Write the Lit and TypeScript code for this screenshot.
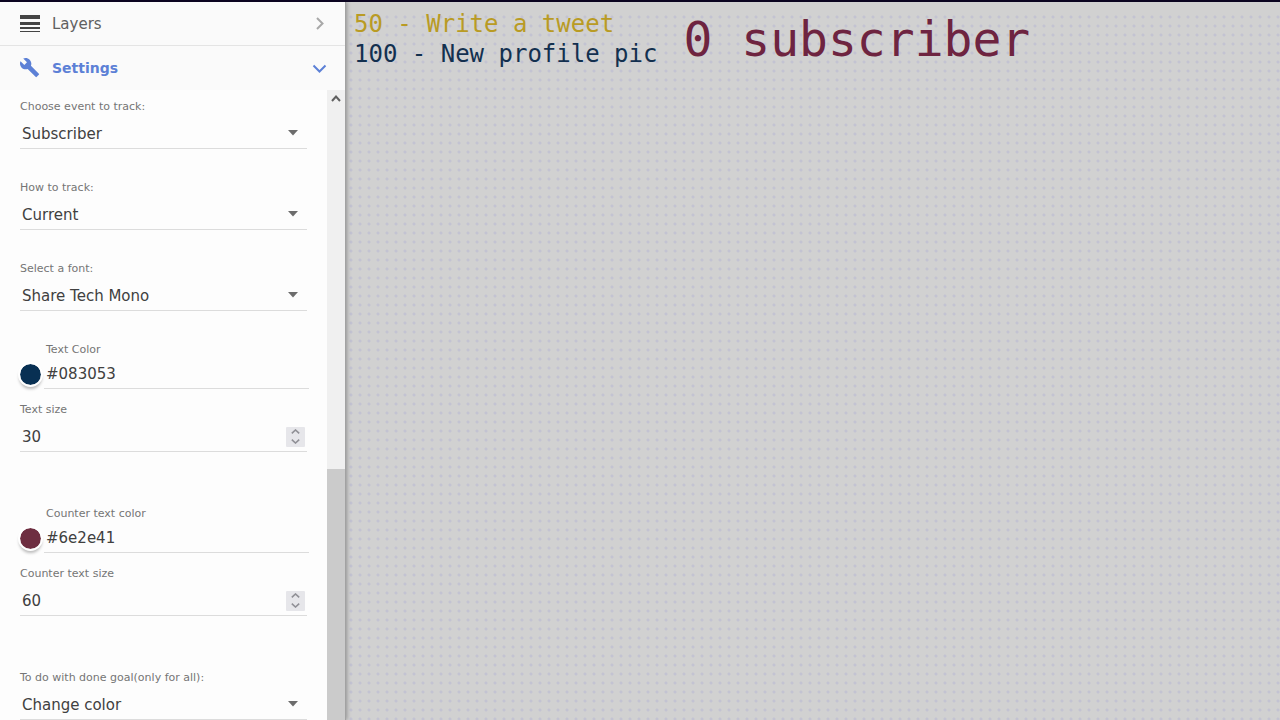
import { LitElement, html, css } from "lit";
import { customElement, property, state } from "lit/decorators.js";

const controls = css`
  * { box-sizing: border-box; }
  .label { display: block; font-size: 11px; line-height: 16px; color: #757575; }
  .control {
    display: block; width: 100%; height: 30px; margin: 0; padding: 1px 2px 0;
    border: 0; border-bottom: 1px solid #dcdcdc; border-radius: 0; outline: 0;
    background: transparent; color: #404040; font: inherit; font-size: 15px; line-height: 28px;
    appearance: none;
  }
`;

@customElement("select-field")
export class SelectField extends LitElement {
  @property() label = "";
  @property({ attribute: false }) options: string[] = [];

  static styles = [controls, css`
    :host { display: block; }
    .wrap { display: grid; margin-top: 4px; align-items: center; }
    .wrap > * { grid-area: 1 / 1; }
    .arrow { justify-self: end; width: 10px; height: 6px; margin: 0 9px 2px 0; fill: #6c6c6c; pointer-events: none; }
  `];

  render() {
    return html`
      <label class="label" for="s">${this.label}</label>
      <div class="wrap">
        <select class="control" id="s">${this.options.map((o) => html`<option>${o}</option>`)}</select>
        <svg class="arrow" viewBox="0 0 10 6"><path d="M0 0h10L5 5.5z" /></svg>
      </div>`;
  }
}

@customElement("color-field")
export class ColorField extends LitElement {
  @property() label = "";
  @property() value = "#000000";

  static styles = [controls, css`
    :host { display: grid; grid-template-columns: 24px 1fr; row-gap: 1px; margin-right: -2px; }
    .label { grid-column: 2; padding-left: 2px; }
    .swatch {
      width: 21px; height: 21px; margin: 5px 0 0; padding: 0; border: 0;
      border-radius: 50%; background: none; appearance: none; outline: 0;
      box-shadow: 0 0 0 2px #fff, 0 3px 3px 1px rgba(0, 0, 0, 0.25);
    }
    .swatch::-webkit-color-swatch-wrapper { padding: 0; }
    .swatch::-webkit-color-swatch { border: 0; border-radius: 50%; }
  `];

  private change(e: Event) {
    this.value = (e.target as HTMLInputElement).value;
  }

  render() {
    return html`
      <label class="label" for="hex">${this.label}</label>
      <input class="swatch" type="color" aria-label="${this.label}" .value=${this.value} @input=${this.change} />
      <input class="control" id="hex" type="text" .value=${this.value} @change=${this.change} />`;
  }
}

@customElement("number-field")
export class NumberField extends LitElement {
  @property() label = "";
  @property({ type: Number }) value = 0;

  static styles = [controls, css`
    :host { display: block; }
    .wrap { display: flex; align-items: center; margin-top: 4px; padding-right: 2px; border-bottom: 1px solid #dcdcdc; }
    .control { flex: 1; min-width: 0; height: 29px; border: 0; appearance: textfield; }
    .control::-webkit-inner-spin-button { display: none; }
    .spin { display: flex; flex-direction: column; width: 19px; height: 20px; background: #e6e6ea; border-radius: 1px; }
    .step { flex: 1; display: grid; place-items: center; padding: 0; border: 0; background: none; }
    svg { width: 9px; height: 5px; fill: none; stroke: #909096; stroke-width: 1.6; }
  `];

  render() {
    return html`
      <label class="label" for="n">${this.label}</label>
      <div class="wrap">
        <input class="control" id="n" type="number" .value=${String(this.value)} />
        <div class="spin">
          <button class="step" aria-label="Increase" @click=${() => this.value++}>
            <svg viewBox="0 0 9 5"><path d="M0.8 4.4 4.5 1l3.7 3.4" /></svg>
          </button>
          <button class="step" aria-label="Decrease" @click=${() => this.value--}>
            <svg viewBox="0 0 9 5"><path d="M0.8 0.6 4.5 4l3.7-3.4" /></svg>
          </button>
        </div>
      </div>`;
  }
}

@customElement("app-root")
export class AppRoot extends LitElement {
  @state() private goals = [
    { at: 50, text: "Write a tweet", done: true },
    { at: 100, text: "New profile pic", done: false },
  ];

  static styles = css`
    * { box-sizing: border-box; }
    :host {
      display: flex; height: 100vh; border-top: 2px solid #0b0420; box-sizing: border-box; overflow: hidden;
      background: #d1d1d1; font-family: "DejaVu Sans", sans-serif;
    }
    .sidebar {
      flex: 0 0 346px; display: flex; flex-direction: column; min-height: 0; z-index: 1;
      background: #fdfdfd; border-right: 1px solid #a2a2a2; box-shadow: 1px 0 4px rgba(0, 0, 0, 0.3);
    }
    .head {
      flex: none; display: flex; align-items: center; gap: 12px; height: 44px; padding: 0 18px 0 20px;
      border: 0; background: #fafafa; color: #606060; font: inherit; font-size: 15px; text-align: left;
    }
    .head.layers { border-bottom: 1px solid #e4e4e4; }
    .head.active { color: #5c80d6; font-size: 14px; font-weight: bold; }
    .title { flex: 1; }
    .icon { width: 20px; height: 20px; fill: currentColor; }
    .icon.bars { fill: #444; }
    .chev { width: 15px; height: 15px; fill: none; stroke: currentColor; stroke-width: 2; }
    .chev.idle { color: #a8a8a8; }
    .panel { flex: 1; display: flex; min-height: 0; }
    .form { flex: 1; min-width: 0; display: flex; flex-direction: column; padding: 9px 20px 0; overflow: hidden; }
    .selects { display: grid; gap: 31px; padding-bottom: 31px; }
    .pair { display: grid; gap: 13px; padding-bottom: 54px; }
    .track { flex: 0 0 18px; display: flex; flex-direction: column; background: #f0f0f0; }
    .up { height: 17px; padding: 0; border: 0; background: none; display: grid; place-items: center; }
    .up svg { width: 10px; height: 7px; fill: none; stroke: #606060; stroke-width: 2; }
    .gap { flex: 362; }
    .thumb { flex: 251; background: #cbcbcb; }
    .stage {
      flex: 1; min-width: 0; display: flex; align-items: flex-start; gap: 26px; padding: 7px 8px 0;
      font-family: "DejaVu Sans Mono", monospace; white-space: nowrap;
      background:
        linear-gradient(#d1d1d1, #d1d1d1) 0 0 / 100% 10px no-repeat,
        radial-gradient(circle at 5px 6px, #bebed2 0, #c5c5d2 1px, transparent 2px) 0 0 / 9px 9px;
    }
    .goals { margin: 0; padding: 0; list-style: none; font-size: 24px; line-height: 30px; color: #13304f; }
    .done { color: #b99b24; }
    .counter { margin: 0; font-size: 48px; line-height: 60px; font-weight: normal; color: #6e2440; }
  `;

  render() {
    return html`
      <aside class="sidebar">
        <button class="head layers">
          <svg class="icon bars" viewBox="0 0 20 20">
            <path d="M0 1h20v4H0zM0 8h20v3H0zM0 13h20v2H0zM0 17h20v1H0z" />
          </svg>
          <span class="title">Layers</span>
          <svg class="chev idle" viewBox="0 0 15 15"><path d="M5 2l5.5 5.5L5 13" /></svg>
        </button>
        <button class="head active" aria-expanded="true">
          <svg class="icon" viewBox="1 1 23 23">
            <path d="M22.7 19l-9.1-9.1c.9-2.3.4-5-1.5-6.9-2-2-5-2.4-7.4-1.3L9 6 6 9 1.6 4.7C.4 7.1.9 10.100 2.900 12.100c1.900 1.900 4.600 2.400 6.900 1.500l9.100 9.100c.4.4 1 .4 1.400 0l2.300-2.300c.5-.4.5-1.100.1-1.400z" />
          </svg>
          <span class="title">Settings</span>
          <svg class="chev" viewBox="0 0 15 15"><path d="M1.500 4.500l6 6 6-6" /></svg>
        </button>
        <div class="panel">
          <div class="form">
            <div class="selects">
              <select-field label="Choose event to track:" .options=${["Subscriber"]}></select-field>
              <select-field label="How to track:" .options=${["Current"]}></select-field>
              <select-field label="Select a font:" .options=${["Share Tech Mono"]}></select-field>
            </div>
            <div class="pair">
              <color-field label="Text Color" value="#083053"></color-field>
              <number-field label="Text size" value="30"></number-field>
            </div>
            <div class="pair">
              <color-field label="Counter text color" value="#6e2e41"></color-field>
              <number-field label="Counter text size" value="60"></number-field>
            </div>
            <select-field label="To do with done goal(only for all):" .options=${["Change color"]}></select-field>
          </div>
          <div class="track">
            <button class="up" aria-label="Scroll up">
              <svg viewBox="0 0 10 7"><path d="M1 6l4-4.500L9 6" /></svg>
            </button>
            <div class="gap"></div>
            <div class="thumb"></div>
          </div>
        </div>
      </aside>
      <main class="stage">
        <ul class="goals">
          ${this.goals.map((g) => html`<li class=${g.done ? "done" : ""}>${g.at} - ${g.text}</li>`)}
        </ul>
        <h1 class="counter">0 subscriber</h1>
      </main>`;
  }
}
